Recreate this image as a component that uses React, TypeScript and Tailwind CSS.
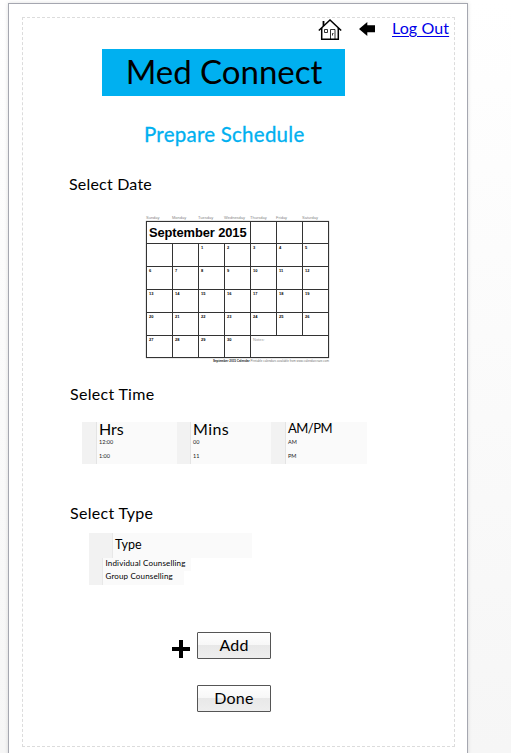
import type { ReactNode } from "react";

const days = ["Sunday", "Monday", "Tuesday", "Wednesday", "Thursday", "Friday", "Saturday"];

function HomeIcon() {
  return (
    <svg width="24" height="22" viewBox="0 0 24 22" fill="none" stroke="#000" className="shrink-0">
      <path d="M0.8 11.5 L12 1 L23.2 11.5" strokeWidth="1.5" />
      <path d="M3.7 9 V20.3 H20.3 V9" strokeWidth="1.5" />
      <path d="M5.5 7 V2" strokeWidth="1.8" />
      <path d="M6.5 10.5 h3 v3 h-3 z M12.5 20 V10.5 h4.5 V20" strokeWidth="0.8" />
      <path d="M14.5 16.5 V14.5 h1" strokeWidth="0.8" />
    </svg>
  );
}

function ArrowIcon() {
  return (
    <svg width="16" height="14" viewBox="0 0 16 14" className="shrink-0">
      <path d="M0 7 L8.3 0 V3.3 H16 V10.3 H8.3 V14 Z" fill="#000" />
    </svg>
  );
}

function Cell({ n }: { n?: number }) {
  return (
    <div className="border-r border-b border-[#333] pl-[2px] pt-[2px] text-[4px] leading-[4px] font-bold">
      {n}
    </div>
  );
}

function Calendar() {
  return (
    <div className="ml-[123px] mt-[21px] h-[148px] w-[183px] font-['Liberation_Sans',sans-serif]">
      <div className="grid h-[6px] grid-cols-[repeat(7,26px)] text-[4px] leading-[5px] text-[#888]">
        {days.map((d) => <span key={d}>{d}</span>)}
      </div>
      <div className="grid w-[183px] grid-cols-[26px_26px_26px_26px_26px_26px_26px] grid-rows-[22px_23px_23px_23px_23px_22px] border-t border-l border-[#333] shadow-[0_0_1px_#0008]">
        <div className="col-span-4 border-r border-b border-[#333] pl-[2px] text-[12.9px] leading-[22px] font-bold tracking-[-0.1px] whitespace-nowrap">September 2015</div>
        <Cell /><Cell /><Cell />
        <Cell /><Cell />
        {Array.from({ length: 30 }, (_, i) => <Cell key={i} n={i + 1} />)}
        <div className="col-span-3 border-r border-b border-[#333] pl-[2px] pt-[2px] text-[4px] leading-[4px] text-[#999]">Notes:</div>
      </div>
      <p className="mt-[1px] text-right text-[3px] leading-[5px] whitespace-nowrap text-[#777]">
        <b className="text-[#222]">September 2015 Calendar</b> Printable calendars available from www.calendarcraze.com
      </p>
    </div>
  );
}

function TimeColumn({ title, rows, className, gutter, titleClass }: { title: string; rows: string[]; className: string; gutter: string; titleClass: string }) {
  return (
    <div className={`flex h-[42px] bg-[#fafafa] ${className}`}>
      <div className={`shrink-0 border-r border-[#e4e4e4] bg-[#f2f2f2] ${gutter}`} />
      <div className="pl-[2px]">
        <div className={`h-[15px] whitespace-nowrap ${titleClass}`}>{title}</div>
        {rows.map((r) => <div key={r} className="h-[14px] text-[5.5px] leading-[11px] text-[#222]">{r}</div>)}
      </div>
    </div>
  );
}

function Button({ children }: { children: ReactNode }) {
  return (
    <button className="flex h-[27px] w-[74px] items-center justify-center rounded-[1px] border border-[#555] bg-[linear-gradient(#fff_0%,#f7f7f7_48%,#e8e8e8_49%,#eee_100%)] pb-[1px] text-[16px] leading-none tracking-[0.2px]">
      {children}
    </button>
  );
}

export default function App() {
  return (
    <div className="h-[753px] w-[511px] overflow-hidden bg-linear-to-b from-white to-[#f6f6f6] pt-[3px] pl-[8px] font-['Lato','Liberation_Sans',sans-serif] text-black">
      <main className="h-[760px] w-[460px] border border-[#a5a7b0] bg-white pt-[13px] pl-[13px] shadow-[0_0_4px_#0002]">
        <div className="h-[730px] w-[433px] border border-dashed border-[#dcdcdc]">
          <header className="flex h-[31px] pt-px pl-[295px]">
            <HomeIcon />
            <div className="ml-[17px] mt-[3px]"><ArrowIcon /></div>
            <a className="ml-[17px] text-[16px] leading-[18px] tracking-[0.1px] whitespace-nowrap text-[#0000e8] underline underline-offset-2">Log Out</a>
          </header>
          <h1 className="ml-[79px] h-[47px] w-[243px] bg-[#00b0f0] pl-px text-center text-[33px] leading-[45px] whitespace-nowrap">Med Connect</h1>
          <h2 className="ml-[121px] mt-[24px] h-[28px] text-[20.5px] leading-[28px] tracking-[0.25px] whitespace-nowrap text-[#00b0f0] [-webkit-text-stroke:0.3px_#00b0f0]">Prepare Schedule</h2>
          <h3 className="ml-[46px] mt-[26px] h-[20px] text-[16px] leading-[20px] tracking-[0.2px]">Select Date</h3>
          <Calendar />
          <h3 className="ml-[47px] mt-[21px] h-[20px] text-[16px] leading-[20px] tracking-[0.3px]">Select Time</h3>
          <div className="ml-[59px] mt-[18px] flex">
            <TimeColumn title="Hrs" rows={["12:00", "1:00"]} className="w-[95px]" gutter="w-[15px]" titleClass="text-[16px] leading-[13px]" />
            <TimeColumn title="Mins" rows={["00", "11"]} className="w-[94px]" gutter="w-[14px]" titleClass="text-[16px] leading-[13px] tracking-[0.4px]" />
            <TimeColumn title="AM/PM" rows={["AM", "PM"]} className="w-[96px]" gutter="w-[15px]" titleClass="text-[13px] leading-[13px] tracking-[-0.5px]" />
          </div>
          <h3 className="ml-[47px] mt-[39px] h-[20px] text-[16px] leading-[20px] tracking-[0.3px]">Select Type</h3>
          <div className="ml-[66px] mt-[10px]">
            <div className="flex h-[25px] w-[163px] bg-[#fafafa]">
              <div className="w-[24px] border-r border-[#e8e8e8] bg-[#f2f2f2]" />
              <span className="pl-[2px] text-[12.5px] leading-[24px] tracking-[0.1px]">Type</span>
            </div>
            <div className="flex h-[13px] w-[102px] bg-[#fafafa]">
              <div className="w-[14px] shrink-0 border-r border-[#e8e8e8] bg-[#f2f2f2]" />
              <span className="pl-[2.5px] text-[8px] leading-[11px] tracking-[0.15px] whitespace-nowrap">Individual Counselling</span>
            </div>
            <div className="flex h-[14px] w-[95px] bg-[#fafafa]">
              <div className="w-[14px] shrink-0 border-r border-[#e8e8e8] bg-[#f2f2f2]" />
              <span className="pl-[2.5px] text-[8px] leading-[11px] tracking-[0.15px] whitespace-nowrap">Group Counselling</span>
            </div>
          </div>
          <div className="ml-[149px] mt-[47px] flex">
            <svg width="18" height="18" viewBox="0 0 18 18" className="mt-[8px] mr-[7px]">
              <path d="M0 9 H18 M9 0 V18" stroke="#000" strokeWidth="4" />
            </svg>
            <Button>Add</Button>
          </div>
          <div className="ml-[174px] mt-[26px]"><Button>Done</Button></div>
        </div>
      </main>
    </div>
  );
}
